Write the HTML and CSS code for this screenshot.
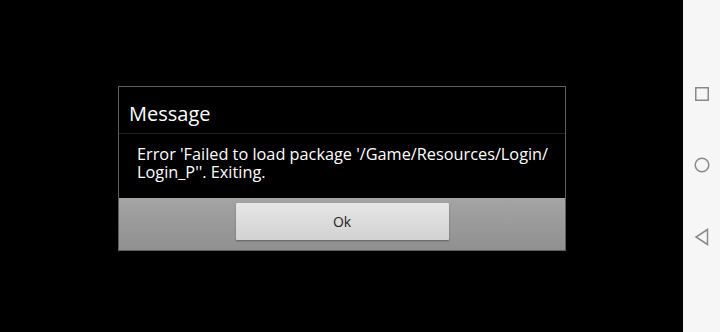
FILE: index.html
```html
<!DOCTYPE html>
<html>
<head>
<meta charset="utf-8">
<link rel="stylesheet" href="styles.css">
</head>
<body>
<div class="screen">
  <main class="stage">
    <div class="dialog">
      <div class="title">Message</div>
      <div class="body">Error 'Failed to load package '/Game/Resources/Login/<br>Login_P''. Exiting.</div>
      <div class="actions">
        <button class="ok">Ok</button>
      </div>
    </div>
  </main>
  <nav class="navbar">
    <svg class="nav-icon" width="16" height="16" viewBox="0 0 16 16"><rect x="1.75" y="1.75" width="12.5" height="12.5" fill="none" stroke="#8a8a8a" stroke-width="1.5"/></svg>
    <svg class="nav-icon" width="16" height="16" viewBox="0 0 16 16"><circle cx="8" cy="8" r="6.8" fill="none" stroke="#8a8a8a" stroke-width="1.5"/></svg>
    <svg class="nav-icon" width="16" height="18" viewBox="0 0 16 18"><path d="M13.5 1.5 L2 9 L13.5 16.5 Z" fill="none" stroke="#8a8a8a" stroke-width="1.5" stroke-linejoin="miter"/></svg>
  </nav>
</div>
</body>
</html>
```

FILE: styles.css
```css
html, body {
  margin: 0;
  padding: 0;
  width: 720px;
  height: 332px;
  overflow: hidden;
  background: #000;
}
.screen {
  display: flex;
  width: 720px;
  height: 332px;
}
.stage {
  width: 683px;
  height: 332px;
  background: #000;
  padding: 86px 0 0 118px;
  box-sizing: border-box;
}
.dialog {
  width: 448px;
  height: 165px;
  box-sizing: border-box;
  border: 1px solid #5e5e5e;
  background: #000;
  display: flex;
  flex-direction: column;
  font-family: "Open Sans", "Noto Sans", sans-serif;
  color: #fff;
}
.title {
  height: 47px;
  box-sizing: border-box;
  padding: 14px 0 0 10px;
  font-size: 20px;
  line-height: 26px;
  border-bottom: 1px solid #222;
}
.body {
  height: 64px;
  box-sizing: border-box;
  padding: 11px 0 0 18px;
  font-size: 16.3px;
  line-height: 18px;
}
.actions {
  flex: 1;
  background: linear-gradient(#a4a4a4, #909090);
  display: flex;
  justify-content: center;
  padding-top: 5px;
  box-sizing: border-box;
}
.ok {
  width: 213px;
  height: 37px;
  border: none;
  border-radius: 1px;
  background: linear-gradient(#e6e6e6, #d2d2d2);
  box-shadow: 0 1px 2px rgba(0,0,0,0.35);
  font-family: "Open Sans", "Noto Sans", sans-serif;
  font-size: 14px;
  color: #222;
  padding: 0;
}
.navbar {
  width: 37px;
  height: 332px;
  background: #f6f6f6;
  display: flex;
  flex-direction: column;
  align-items: center;
  padding-top: 86px;
  gap: 55px;
  box-sizing: border-box;
}
.nav-icon { display: block; }
```
